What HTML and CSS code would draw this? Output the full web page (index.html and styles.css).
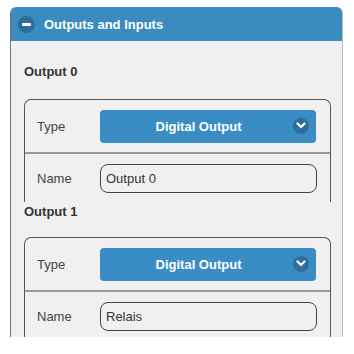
FILE: index.html
```html
<!DOCTYPE html>
<html lang="en">
<head>
  <meta charset="UTF-8">
  <meta name="viewport" content="width=device-width, initial-scale=1.0">
  <title>Outputs and Inputs</title>
  <link rel="stylesheet" href="styles.css">
</head>
<body>
  <div class="panel">
    <div class="panel-head">
      <span class="toggle"><span class="bar"></span></span>
      <span class="title">Outputs and Inputs</span>
    </div>
    <div class="panel-body">
      <div class="group-title">Output 0</div>
      <div class="box">
        <div class="row row-type">
          <span class="label">Type</span>
          <div class="select">
            <span>Digital Output</span>
            <span class="chev">
              <svg width="10" height="7" viewBox="0 0 10 7"><path d="M1.5 1.5 L5 5 L8.5 1.5" fill="none" stroke="#fff" stroke-width="2.2" stroke-linecap="round" stroke-linejoin="round"/></svg>
            </span>
          </div>
        </div>
        <div class="row row-name">
          <span class="label">Name</span>
          <div class="input">Output 0</div>
        </div>
      </div>
      <div class="group-title second">Output 1</div>
      <div class="box">
        <div class="row row-type">
          <span class="label">Type</span>
          <div class="select">
            <span>Digital Output</span>
            <span class="chev">
              <svg width="10" height="7" viewBox="0 0 10 7"><path d="M1.5 1.5 L5 5 L8.5 1.5" fill="none" stroke="#fff" stroke-width="2.2" stroke-linecap="round" stroke-linejoin="round"/></svg>
            </span>
          </div>
        </div>
        <div class="row row-name">
          <span class="label">Name</span>
          <div class="input">Relais</div>
        </div>
      </div>
    </div>
  </div>
</body>
</html>
```

FILE: styles.css
```css
body {
  margin: 0;
  background: #fff;
  font-family: 'Liberation Sans', Arial, sans-serif;
}
.panel {
  box-sizing: border-box;
  width: 333px;
  height: 330px;
  margin: 7px 0 0 10px;
  border: 1px solid #bbb;
  border-left-color: #777;
  border-top: none;
  border-bottom: none;
  border-radius: 6px 6px 0 0;
  background: #f0f0f0;
  overflow: hidden;
}
.panel-head {
  height: 34px;
  margin: 0 -1px;
  background: #3a8bc0;
  border-radius: 6px 6px 0 0;
  display: flex;
  align-items: center;
  padding-left: 8px;
  gap: 9px;
}
.toggle {
  width: 17px;
  height: 17px;
  border-radius: 50%;
  background: #2b6d9c;
  display: flex;
  align-items: center;
  justify-content: center;
}
.toggle .bar {
  width: 9px;
  height: 3px;
  background: #fff;
  border-radius: 1px;
}
.title {
  color: #fff;
  font-weight: bold;
  font-size: 13px;
}
.panel-body {
  padding: 0 11px 0 13px;
}
.group-title {
  font-weight: bold;
  font-size: 13px;
  color: #333;
  line-height: 16px;
  margin-top: 23px;
  margin-bottom: 19px;
}
.group-title.second {
  margin-top: 2px;
  margin-bottom: 17px;
}
.box {
  border: 1px solid #555;
  border-bottom: none;
  border-radius: 7px 7px 0 0;
}
.row {
  display: flex;
  align-items: center;
  padding: 0 14px 0 12px;
}
.row-type {
  height: 52px;
  border-bottom: 2px solid #999;
}
.row-name {
  height: 48px;
}
.label {
  width: 63px;
  font-size: 13px;
  color: #444;
}
.select {
  flex: 1;
  box-sizing: border-box;
  height: 33px;
  padding-right: 19px;
  background: #3a8dc4;
  border-radius: 4px;
  display: flex;
  align-items: center;
  justify-content: center;
  position: relative;
  color: #fff;
  font-weight: bold;
  font-size: 13px;
}
.chev {
  position: absolute;
  right: 7px;
  top: 8px;
  width: 16px;
  height: 16px;
  border-radius: 50%;
  background: #2e6e9d;
  display: flex;
  align-items: center;
  justify-content: center;
}
.input {
  flex: 1;
  box-sizing: border-box;
  height: 29px;
  margin-right: -1px;
  border: 1px solid #444;
  border-radius: 8px;
  padding-left: 5px;
  display: flex;
  align-items: center;
  font-size: 13px;
  color: #333;
}
```
